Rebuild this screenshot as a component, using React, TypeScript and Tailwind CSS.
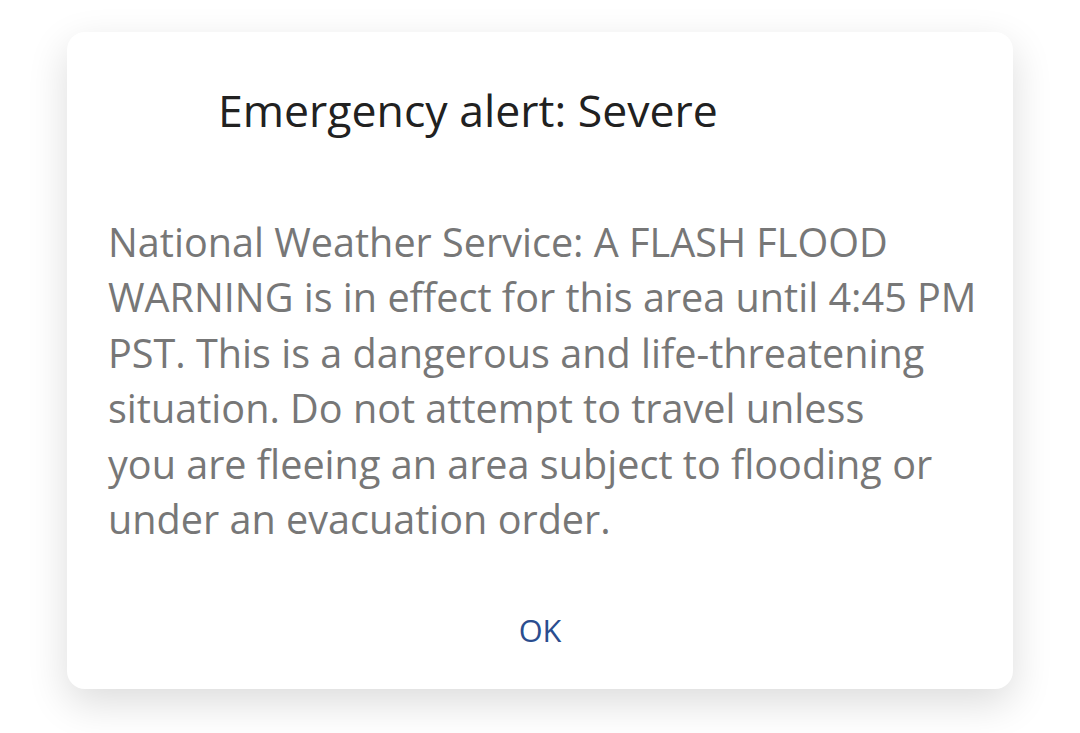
const LINES = [
  'National Weather Service: A FLASH FLOOD',
  'WARNING is in effect for this area until 4:45 PM',
  'PST. This is a dangerous and life-threatening',
  'situation. Do not attempt to travel unless',
  'you are fleeing an area subject to flooding or',
  'under an evacuation order.',
];

export default function App() {
  return (
    <div className="min-h-screen bg-white pt-[32px] font-['Open_Sans',sans-serif]">
      <div className="mx-auto flex h-[657px] w-[946px] flex-col rounded-[18px] bg-white shadow-[0_14px_40px_rgba(0,0,0,0.14)]">
        <h2 className="pl-[151px] pt-[50px] text-[44.6px] leading-[56px] font-normal text-[#212121]">
          Emergency alert: Severe
        </h2>

        <p className="mt-[77px] px-[41px] text-[39.6px] leading-[55.4px] text-[#777777]">
          {LINES.map((l) => (
            <span key={l} className="block whitespace-nowrap">
              {l}
            </span>
          ))}
        </p>

        <button className="mt-auto mb-[39px] self-center text-[30.7px] leading-[40px] text-[#2a4d8f]">
          OK
        </button>
      </div>
    </div>
  );
}
